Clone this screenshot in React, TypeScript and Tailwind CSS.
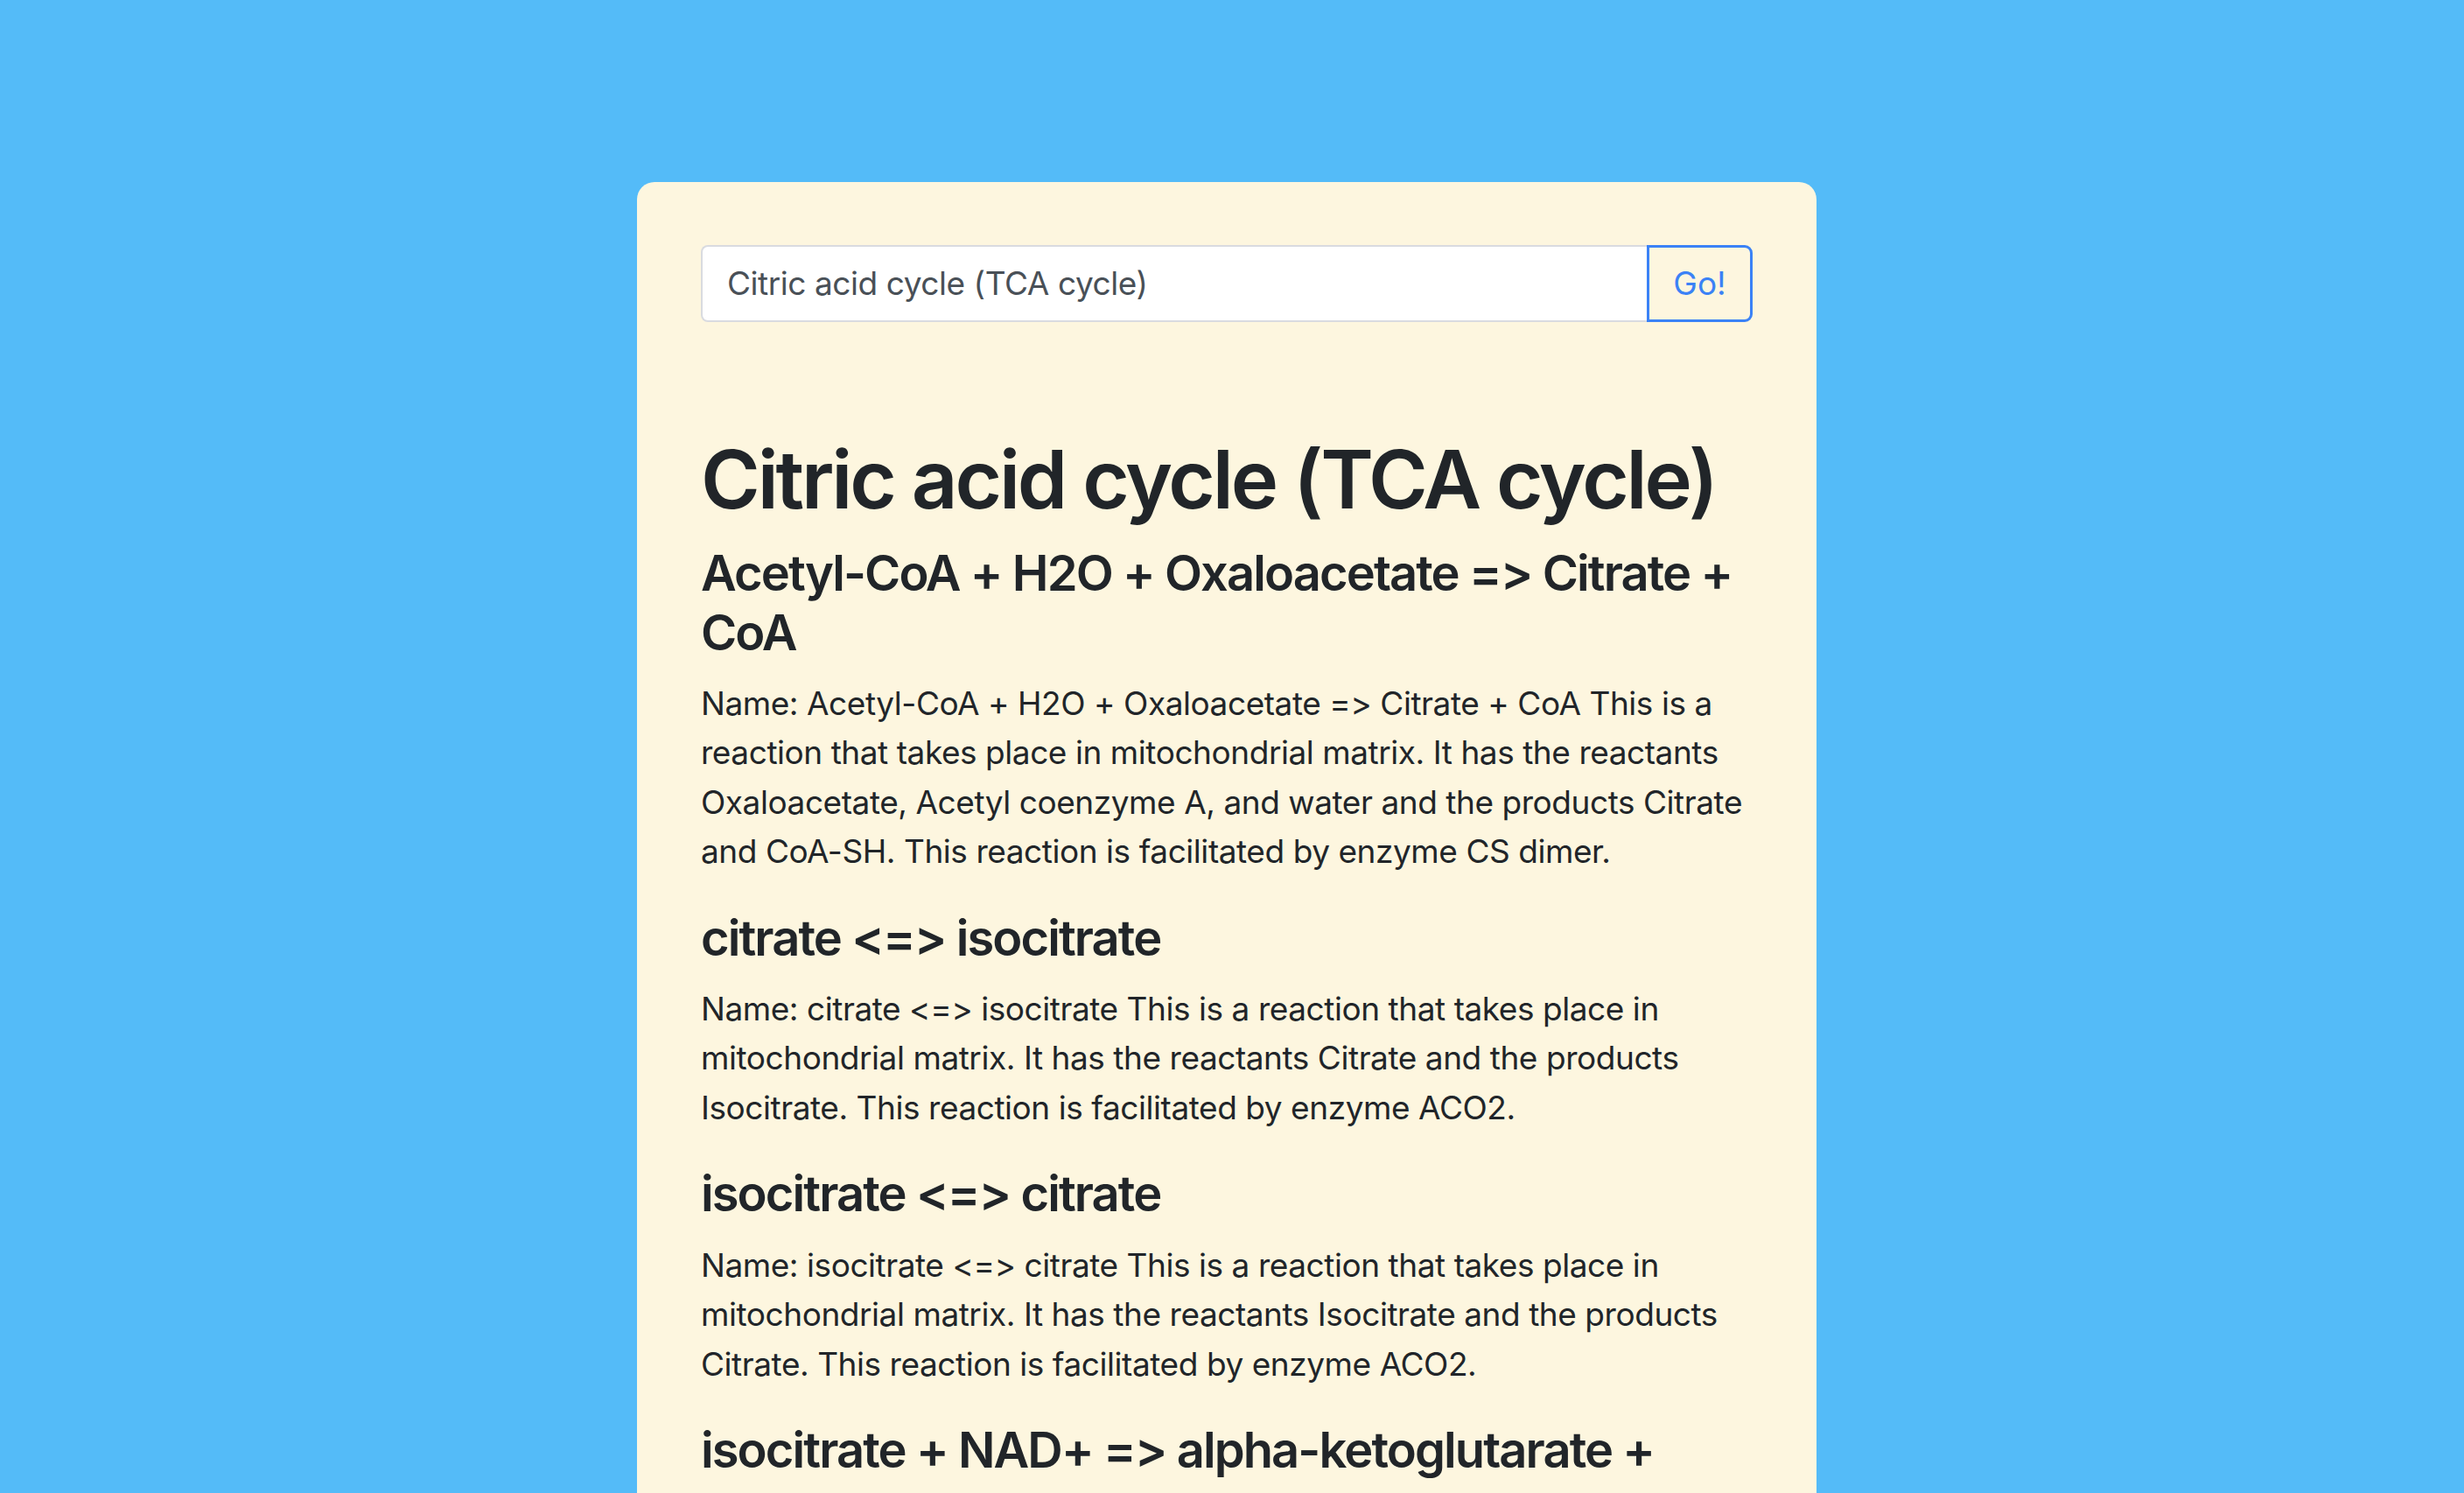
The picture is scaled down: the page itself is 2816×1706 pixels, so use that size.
import React from "react";

type Reaction = {
  title: string;
  lines: string[];
};

const reactions: Reaction[] = [
  {
    title: "Acetyl-CoA + H2O + Oxaloacetate => Citrate + CoA",
    lines: [
      "Name: Acetyl-CoA + H2O + Oxaloacetate => Citrate + CoA This is a",
      "reaction that takes place in mitochondrial matrix. It has the reactants",
      "Oxaloacetate, Acetyl coenzyme A, and water and the products Citrate",
      "and CoA-SH. This reaction is facilitated by enzyme CS dimer.",
    ],
  },
  {
    title: "citrate <=> isocitrate",
    lines: [
      "Name: citrate <=> isocitrate This is a reaction that takes place in",
      "mitochondrial matrix. It has the reactants Citrate and the products",
      "Isocitrate. This reaction is facilitated by enzyme ACO2.",
    ],
  },
  {
    title: "isocitrate <=> citrate",
    lines: [
      "Name: isocitrate <=> citrate This is a reaction that takes place in",
      "mitochondrial matrix. It has the reactants Isocitrate and the products",
      "Citrate. This reaction is facilitated by enzyme ACO2.",
    ],
  },
  {
    title: "isocitrate + NAD+ => alpha-ketoglutarate +",
    lines: [],
  },
];

const App = () => {
  return (
    <div className="flex h-[1706px] justify-center overflow-hidden bg-[#54bbf8] pt-[208px] pr-[12px] font-['Inter','Noto_Sans',sans-serif] text-[#212529]">
      <div className="w-[1348px] min-h-[1600px] rounded-t-[20px] bg-[#fdf6df] px-[73px] pt-[72px]">
        <form className="flex h-[88px]" onSubmit={(e) => e.preventDefault()}>
          <input
            className="flex-1 min-w-0 rounded-l-[8px] border-2 border-r-0 border-[#d9dbe0] bg-white px-[28px] text-[37px] tracking-[-0.012em] text-[#495057] outline-none"
            defaultValue="Citric acid cycle (TCA cycle)"
          />
          <button
            type="submit"
            className="w-[121px] rounded-r-[9px] border-[3px] border-[#3b82f6] text-[37px] text-[#3b82f6]"
          >
            Go!
          </button>
        </form>

        <h1 className="mt-[125px] mb-[19px] text-[92px] font-semibold leading-[1.2] tracking-[-0.034em]">
          Citric acid cycle (TCA cycle)
        </h1>

        {reactions.map((r) => (
          <div key={r.title} className="mb-[37px]">
            <h4 className="mb-[19px] text-[56px] font-semibold leading-[1.2] tracking-[-0.034em]">
              {r.title}
            </h4>
            {r.lines.length > 0 && (
              <p className="text-[37px] leading-[56.5px] tracking-[-0.012em]">
                {r.lines.map((line, i) => (
                  <React.Fragment key={i}>
                    {line}
                    {i < r.lines.length - 1 && <br />}
                  </React.Fragment>
                ))}
              </p>
            )}
          </div>
        ))}
      </div>
    </div>
  );
};

export default App;
